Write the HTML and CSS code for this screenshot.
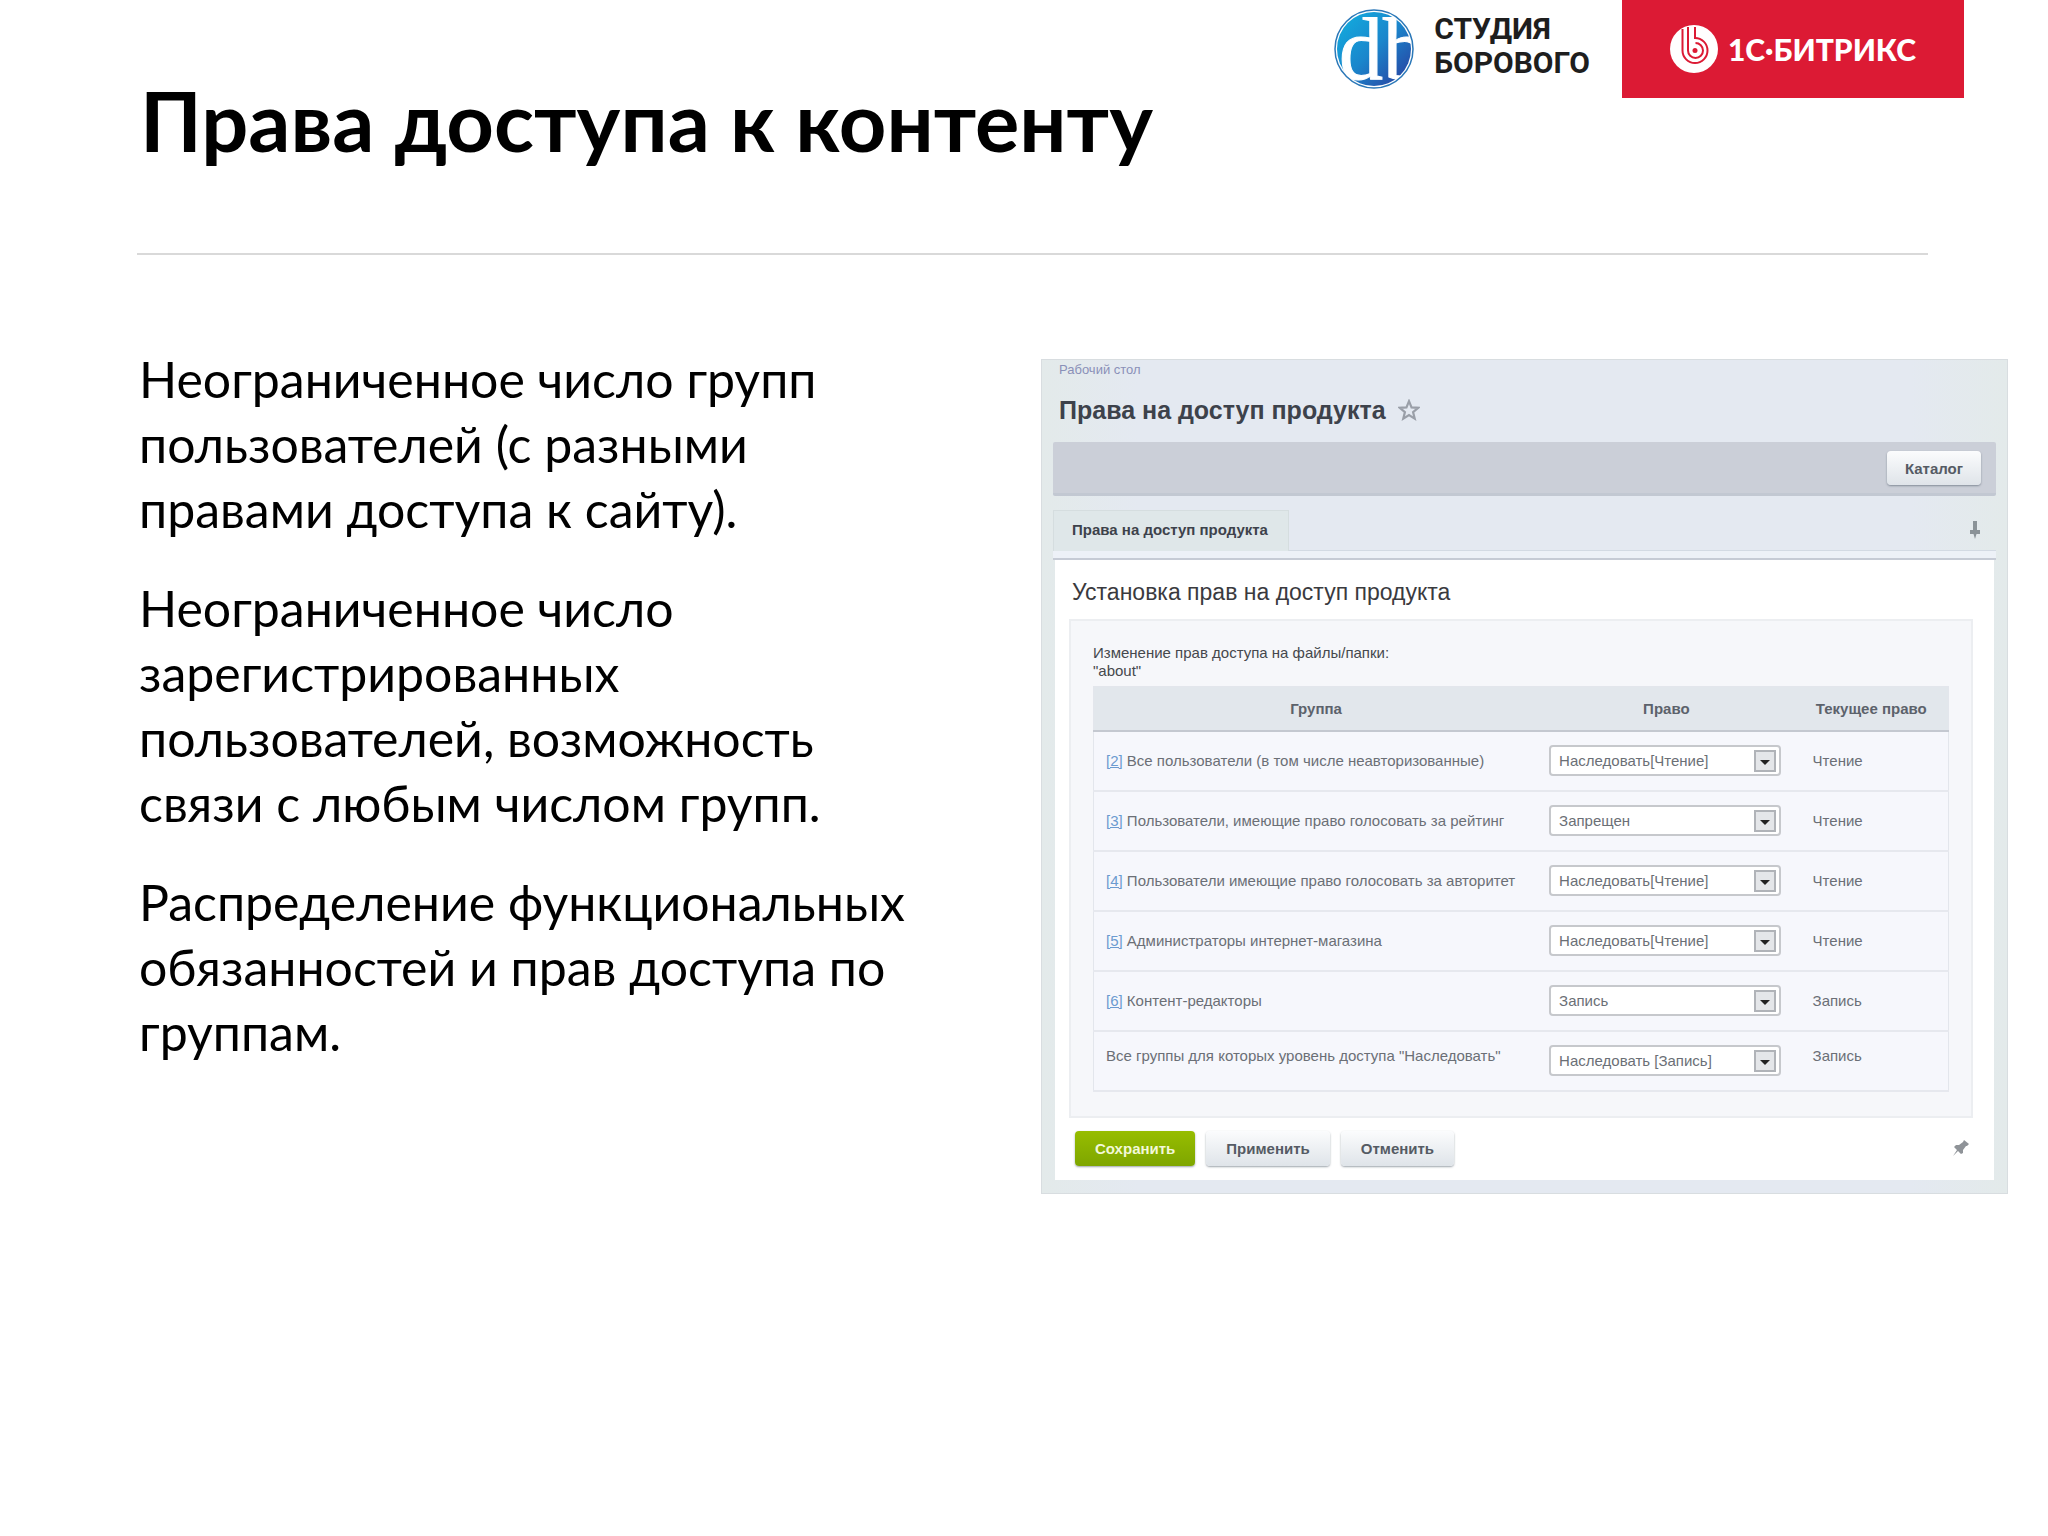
FILE: index.html
```html
<!DOCTYPE html>
<html lang="ru">
<head>
    <meta charset="UTF-8">
    <meta name="viewport" content="width=device-width, initial-scale=1.0">
    <title>Права доступа к контенту</title>
    <link rel="stylesheet" href="styles.css">
</head>
<body>
<header class="slide-header">
    <h1>Права доступа к контенту</h1>
    <div class="logos">
        <div class="studio">
            <svg class="studio-mark" viewBox="0 0 96 80" aria-hidden="true">
                <defs>
                    <linearGradient id="studioFill" x1="0" y1="0" x2="1" y2="1">
                        <stop offset="0" stop-color="#12b0e0"/>
                        <stop offset="0.5" stop-color="#1a86cc"/>
                        <stop offset="1" stop-color="#2a3a9c"/>
                    </linearGradient>
                </defs>
                <circle cx="40" cy="40" r="37" fill="url(#studioFill)"/>
                <text class="studio-letters" x="5" y="70">db</text>
                <circle cx="40" cy="40" r="39" fill="none" stroke="#2b78b8" stroke-width="1.5"/>
            </svg>
            <div class="studio-name">СТУДИЯ<br>БОРОВОГО</div>
        </div>
        <div class="bitrix">
            <svg class="bitrix-mark" viewBox="0 0 48 48" aria-hidden="true">
                <circle cx="24" cy="24" r="24" fill="#ffffff"/>
                <g fill="none" stroke="#dc1a34" stroke-width="2">
                    <path d="M12.500 4V25.500A12.500 12.500 0 1 0 25 13"/>
                    <path d="M18 2V25.500A7.500 7.500 0 1 0 25.500 18"/>
                    <path d="M25 2V14"/>
                </g>
                <circle cx="25" cy="25.500" r="2.500" fill="#dc1a34"/>
            </svg>
            <span class="bitrix-name">1С·БИТРИКС</span>
        </div>
    </div>
</header>

<main class="slide-body">
    <div class="description">
        <p>Неограниченное число групп пользователей (с разными правами доступа к сайту).</p>
        <p>Неограниченное число зарегистрированных пользователей, возможность связи с любым числом групп.</p>
        <p>Распределение функциональных обязанностей и прав доступа по группам.</p>
    </div>

    <section class="admin">
        <a class="breadcrumb" href="#">Рабочий стол</a>
        <h2 class="admin-title">
            Права на доступ продукта
            <svg class="star" viewBox="0 0 20 20" aria-hidden="true">
                <path d="M10 2l2.300 5.600 6 .4-4.600 3.900 1.500 5.900L10 14.600l-5.200 3.200 1.500-5.900L1.700 8l6-.4z"/>
            </svg>
        </h2>
        <div class="toolbar">
            <button type="button" class="btn">Каталог</button>
        </div>
        <div class="tabs">
            <a class="tab" href="#">Права на доступ продукта</a>
            <svg class="pin-down" viewBox="0 0 12 20" aria-hidden="true">
                <path d="M4 1h4v9h3v4H7.500L6 19l-1.500-5H1v-4h3z"/>
            </svg>
        </div>
        <form class="panel">
            <h3>Установка прав на доступ продукта</h3>
            <div class="panel-content">
                <p class="note">Изменение прав доступа на файлы/папки:<br>"about"</p>
                <table class="rights">
                    <thead>
                        <tr>
                            <th class="col-group">Группа</th>
                            <th class="col-right">Право</th>
                            <th class="col-current">Текущее право</th>
                        </tr>
                    </thead>
                    <tbody>
                        <tr>
                            <td><label for="right2"><a href="#">[2]</a> Все пользователи (в том числе неавторизованные)</label></td>
                            <td><select id="right2"><option>Наследовать[Чтение]</option></select></td>
                            <td>Чтение</td>
                        </tr>
                        <tr>
                            <td><label for="right3"><a href="#">[3]</a> Пользователи, имеющие право голосовать за рейтинг</label></td>
                            <td><select id="right3"><option>Запрещен</option></select></td>
                            <td>Чтение</td>
                        </tr>
                        <tr>
                            <td><label for="right4"><a href="#">[4]</a> Пользователи имеющие право голосовать за авторитет</label></td>
                            <td><select id="right4"><option>Наследовать[Чтение]</option></select></td>
                            <td>Чтение</td>
                        </tr>
                        <tr>
                            <td><label for="right5"><a href="#">[5]</a> Администраторы интернет-магазина</label></td>
                            <td><select id="right5"><option>Наследовать[Чтение]</option></select></td>
                            <td>Чтение</td>
                        </tr>
                        <tr>
                            <td><label for="right6"><a href="#">[6]</a> Контент-редакторы</label></td>
                            <td><select id="right6"><option>Запись</option></select></td>
                            <td>Запись</td>
                        </tr>
                        <tr class="row-all">
                            <td><label for="rightAll">Все группы для которых уровень доступа "Наследовать"</label></td>
                            <td><select id="rightAll"><option>Наследовать [Запись]</option></select></td>
                            <td>Запись</td>
                        </tr>
                    </tbody>
                </table>
            </div>
            <div class="actions">
                <button type="submit" class="btn btn-save">Сохранить</button>
                <button type="button" class="btn">Применить</button>
                <button type="button" class="btn">Отменить</button>
                <svg class="pin" viewBox="0 0 20 20" aria-hidden="true">
                    <path d="M13 2l5 4-2 2-1 0-3 4 0 3-2 1-3-3-5 5 4-6-3-3 2-2 3 0 4-3z"/>
                </svg>
            </div>
        </form>
    </section>
</main>
</body>
</html>
```

FILE: styles.css
```css
* {
    box-sizing: border-box;
}

body {
    margin: 0;
    background-color: #fff;
    color: #000;
    font-family: Lato, "Noto Sans", sans-serif;
}

h1, h2, h3, p {
    margin: 0;
}

/* Slide header */
.slide-header {
    display: flex;
    justify-content: space-between;
    align-items: flex-start;
    min-height: 255px;
    margin: 0 120px 0 137px;
    border-bottom: 2px solid #d9d9d9;
}

.slide-header h1 {
    padding: 70px 0 0 3px;
    font-size: 83px;
    line-height: 100px;
    font-weight: bold;
    white-space: nowrap;
}

.logos {
    display: flex;
    gap: 32px;
    margin-right: -36px;
}

.studio {
    display: flex;
    gap: 4px;
    padding-top: 9px;
}

.studio-mark {
    width: 96px;
    height: 80px;
}

.studio-letters {
    font-family: "Liberation Serif", serif;
    font-size: 88px;
    fill: #fff;
    stroke: #fff;
    stroke-width: 1;
}

.studio-name {
    padding-top: 3px;
    color: #1e1e1e;
    font-family: Roboto, sans-serif;
    font-size: 30px;
    line-height: 34px;
    font-weight: bold;
}

.bitrix {
    display: flex;
    align-items: center;
    gap: 10px;
    height: 98px;
    padding: 0 48px;
    background-color: #dc1a34;
    color: #fff;
}

.bitrix-mark {
    width: 48px;
    height: 48px;
}

.bitrix-name {
    font-family: Lato, sans-serif;
    font-size: 30px;
    font-weight: 900;
    white-space: nowrap;
}

/* Slide body */
.slide-body {
    display: grid;
    grid-template-columns: 902fr 967fr;
    align-items: start;
    padding: 92px 40px 0 139px;
}

.description {
    display: flex;
    flex-direction: column;
    gap: 34px;
    padding-right: 120px;
    font-size: 50px;
    line-height: 65px;
}

/* Admin window */
.admin {
    margin-top: 12px;
    padding: 0 11px 13px;
    border: 1px solid #d8dde0;
    background: linear-gradient(90deg, #e3eaea, #e4e9f1 10%, #e4e9f1 90%, #e3eaea);
    font-family: "Liberation Sans", Arial, sans-serif;
    font-size: 15px;
    color: #6b6f76;
}

.breadcrumb {
    display: block;
    padding: 1px 6px 0;
    color: #8a90b8;
    font-size: 13px;
    line-height: 18px;
    text-decoration: none;
}

.admin-title {
    display: flex;
    align-items: center;
    gap: 12px;
    padding: 16px 6px 17px;
    color: #3d424b;
    font-size: 25px;
    line-height: 30px;
}

.star {
    width: 22px;
    height: 22px;
    fill: none;
    stroke: #9a9fa8;
    stroke-width: 2;
}

.toolbar {
    display: flex;
    justify-content: flex-end;
    height: 54px;
    padding: 9px 15px;
    border-bottom: 3px solid #c2c8d2;
    border-radius: 2px;
    background-color: #cbcfd8;
}

.btn {
    height: 35px;
    padding: 0 20px;
    border: none;
    border-radius: 4px;
    background: linear-gradient(#fbfcfd, #dfe4e9);
    box-shadow: 0 1px 2px rgba(60, 75, 90, 0.5);
    color: #555b64;
    font-family: inherit;
    font-size: 15px;
    font-weight: bold;
}

.toolbar .btn {
    height: 34px;
    padding: 0 18px;
}

.tabs {
    display: flex;
    justify-content: space-between;
    align-items: flex-start;
    height: 64px;
    padding-top: 14px;
    border-bottom: 2px solid #c6cbd5;
    background: linear-gradient(transparent 54px, #d3dae3 54px, #d3dae3 55px, #edf1f7 55px);
}

.tab {
    padding: 0 20px 2px 18px;
    border: 1px solid #d5dddf;
    border-bottom: none;
    background-color: #dfe7e9;
    color: #3d424b;
    font-size: 15px;
    line-height: 38px;
    font-weight: bold;
    text-decoration: none;
}

.pin-down {
    width: 12px;
    height: 20px;
    margin: 10px 15px 0 0;
    fill: #8b9398;
}

.panel {
    margin: 0 2px;
    padding: 0 21px 14px 14px;
    background-color: #fff;
}

.panel h3 {
    padding: 17px 3px 12px;
    color: #3a3a3e;
    font-size: 23px;
    line-height: 30px;
    font-weight: normal;
}

.panel-content {
    padding: 23px 22px 24px;
    border: 2px solid #eceef1;
    background-color: #f6f7fa;
}

.note {
    padding-bottom: 6px;
    color: #45484d;
    line-height: 18px;
}

/* Rights table */
.rights {
    width: 100%;
    table-layout: fixed;
    border-collapse: collapse;
    border: 1px solid #e3e6ec;
    background-color: #f6f7fc;
}

.rights th {
    height: 44px;
    padding: 0;
    border-bottom: 2px solid #c4c8d0;
    background-color: #e2e7ec;
    color: #5c626b;
}

.col-group {
    width: 52%;
}

.col-right {
    width: 30%;
}

.rights td {
    height: 60px;
    padding: 0 0 0 12px;
    border-bottom: 2px solid #e6e8ee;
    white-space: nowrap;
}

.rights td:nth-child(2) {
    padding: 0 14px 0 11px;
}

.rights td:last-child {
    padding-left: 18px;
}

.rights td a {
    color: #6c9bd0;
}

.rights .row-all td {
    padding-bottom: 10px;
}

.rights .row-all td:nth-child(2) {
    padding-bottom: 0;
}

.rights select {
    display: block;
    width: 100%;
    height: 31px;
    padding: 0 30px 0 8px;
    border: 2px solid #c6c8cc;
    border-radius: 4px;
    appearance: none;
    background: #fff url("data:image/svg+xml,%3Csvg xmlns='http://www.w3.org/2000/svg' width='22' height='22'%3E%3Crect x='1' y='1' width='20' height='20' fill='%23e4e6e9' stroke='%23b0b3b8' stroke-width='2'/%3E%3Cpath d='M6 10h10l-5 5z' fill='%23222'/%3E%3C/svg%3E") no-repeat right 3px center;
    color: #6b6f76;
    font-family: inherit;
    font-size: 15px;
}

.actions {
    display: flex;
    align-items: center;
    gap: 11px;
    padding: 13px 0 0 6px;
}

.btn-save {
    background: linear-gradient(#97bd00, #7ea600);
    color: #f2f8d8;
}

.pin {
    width: 20px;
    height: 20px;
    margin-left: auto;
    margin-right: 2px;
    fill: #8f9398;
}
```
